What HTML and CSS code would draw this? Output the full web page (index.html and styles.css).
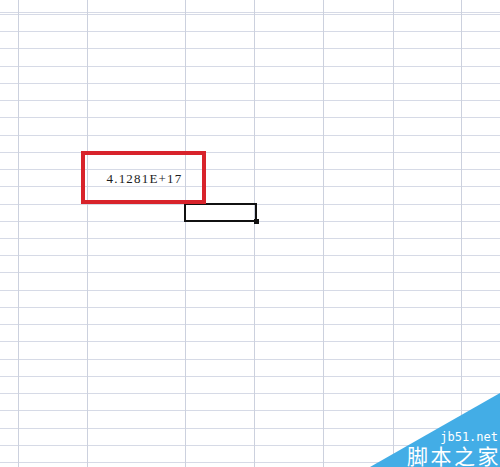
FILE: index.html
```html
<!DOCTYPE html>
<html>
<head>
<meta charset="utf-8">
<link rel="stylesheet" href="styles.css">
</head>
<body>
<div class="sheet">
  <div class="col c1"></div>
  <div class="col c2"></div>
  <div class="col c3"></div>
  <div class="col c4"></div>
  <div class="col c5"></div>
  <div class="col c6"></div>
  <div class="col c7"></div>
  <div class="col c8"></div>

  <div class="selection"><span class="handle"></span></div>
  <div class="highlight"><span class="value">4.1281E+17</span></div>

  <div class="watermark">
    <span class="wm-url">jb51.net</span>
    <span class="wm-name">脚本之家</span>
  </div>
</div>
</body>
</html>
```

FILE: styles.css
```css
html, body {
  margin: 0;
  padding: 0;
  background: #ffffff;
}

.sheet {
  position: relative;
  width: 500px;
  height: 467px;
  overflow: hidden;
  display: flex;
  background-color: #ffffff;
  background-image: repeating-linear-gradient(to bottom, #d6dae6 0, #d6dae6 1px, transparent 1px, transparent 17.23px);
  background-position: 0 14px;
}

.col {
  box-sizing: border-box;
  height: 100%;
  border-right: 1px solid #ccd1de;
  flex: none;
}
.c1 { width: 19px; }
.c2 { width: 69px; }
.c3 { width: 98px; }
.c4 { width: 69px; }
.c5 { width: 69px; }
.c6 { width: 70px; }
.c7 { width: 68px; }
.c8 { flex: 1; border-right: none; }

.selection {
  position: absolute;
  left: 184px;
  top: 203px;
  width: 73px;
  height: 19px;
  box-sizing: border-box;
  border: 2px solid #111111;
}
.handle {
  position: absolute;
  right: -4px;
  bottom: -4px;
  width: 5px;
  height: 5px;
  background: #111111;
}

.highlight {
  position: absolute;
  left: 81px;
  top: 151px;
  width: 125px;
  height: 53px;
  box-sizing: border-box;
  border: 4px solid #d8232b;
  display: flex;
  align-items: center;
  justify-content: center;
}
.value {
  font-family: "Liberation Serif", serif;
  font-size: 13px;
  letter-spacing: 1.2px;
  color: #1c1c1c;
  line-height: 1;
  margin-top: 1px;
  margin-left: 2px;
}

.watermark {
  position: absolute;
  right: 0;
  bottom: 0;
  width: 130px;
  height: 74px;
  display: flex;
  flex-direction: column;
  align-items: flex-end;
  justify-content: flex-end;
  color: #ffffff;
  padding-bottom: 1px;
  box-sizing: border-box;
}
.watermark::before {
  content: "";
  position: absolute;
  inset: 0;
  background: #43ade6;
  clip-path: polygon(100% 0, 100% 100%, 0 100%);
}
.wm-url {
  position: relative;
  font-family: "DejaVu Sans Mono", monospace;
  font-size: 12px;
  line-height: 14px;
  margin-right: 2px;
}
.wm-name {
  position: relative;
  font-family: "Noto Sans CJK SC", sans-serif;
  font-size: 21px;
  line-height: 22px;
  letter-spacing: 2.5px;
  margin-right: -1px;
}
```
